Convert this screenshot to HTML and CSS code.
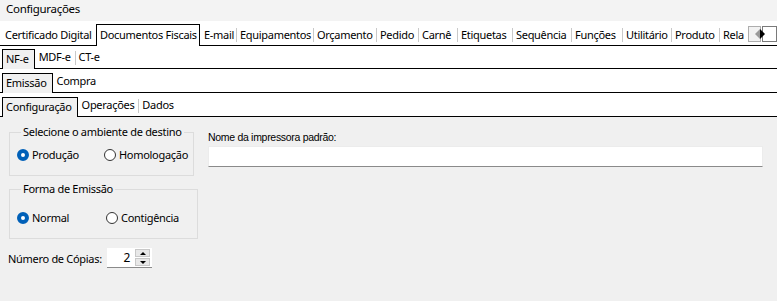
FILE: index.html
```html
<!DOCTYPE html>
<html lang="pt-BR">
<head>
  <meta charset="UTF-8">
  <title>Configurações</title>
  <link rel="stylesheet" href="styles.css">
</head>
<body>
  <div class="titlebar">Configurações</div>

  <div class="tabstrip main">
    <div class="tab">Certificado Digital</div>
    <div class="tab active">Documentos Fiscais</div>
    <div class="tab">E-mail</div>
    <div class="tab">Equipamentos</div>
    <div class="tab">Orçamento</div>
    <div class="tab">Pedido</div>
    <div class="tab">Carnê</div>
    <div class="tab">Etiquetas</div>
    <div class="tab">Sequência</div>
    <div class="tab">Funções</div>
    <div class="tab">Utilitário</div>
    <div class="tab">Produto</div>
    <div class="tab">Rela</div>
    <div class="scroller">
      <span class="scroll-btn disabled"><span class="tri left"></span></span>
      <span class="scroll-btn"><span class="tri right"></span></span>
    </div>
  </div>

  <div class="tabstrip sub first">
    <div class="tab active">NF-e</div>
    <div class="tab">MDF-e</div>
    <div class="tab">CT-e</div>
  </div>

  <div class="tabstrip sub">
    <div class="tab active">Emissão</div>
    <div class="tab">Compra</div>
  </div>

  <div class="tabstrip sub">
    <div class="tab active">Configuração</div>
    <div class="tab">Operações</div>
    <div class="tab">Dados</div>
  </div>

  <div class="content">
    <div class="left">
      <fieldset class="group amb">
        <legend>Selecione o ambiente de destino</legend>
        <div class="options">
          <label class="radio checked"><span class="dot"></span>Produção</label>
          <label class="radio"><span class="dot"></span>Homologação</label>
        </div>
      </fieldset>

      <fieldset class="group forma">
        <legend>Forma de Emissão</legend>
        <div class="options">
          <label class="radio checked"><span class="dot"></span>Normal</label>
          <label class="radio"><span class="dot"></span>Contigência</label>
        </div>
      </fieldset>

      <div class="copies">
        <span class="copies-label">Número de Cópias:</span>
        <div class="spin">
          <span class="spin-value">2</span>
          <div class="spin-btns">
            <span class="spin-btn"><span class="tri up"></span></span>
            <span class="spin-btn"><span class="tri down"></span></span>
          </div>
        </div>
      </div>
    </div>

    <div class="right">
      <div class="field-label">Nome da impressora padrão:</div>
      <div class="textbox"></div>
    </div>
  </div>
</body>
</html>
```

FILE: styles.css
```css
body {
  margin: 0;
  font-family: "Noto Sans", "Open Sans", sans-serif;
  font-size: 11px;
  letter-spacing: -0.3px;
  color: #000;
  background-color: #f0f0f0;
  height: 301px;
  overflow: hidden;
}
.titlebar {
  height: 21px;
  line-height: 17px;
  padding-left: 6px;
  font-size: 11.5px;
  background-color: #f3f3f3;
}
.tabstrip {
  display: flex;
  align-items: flex-end;
  background: #fff;
  border-bottom: 1px solid #000;
  height: 23px;
}
.tabstrip.main {
  height: 24px;
}
.tabstrip.sub {
  padding-left: 2px;
}
.tabstrip.sub.first {
  height: 22px;
}
.tab {
  flex-shrink: 0;
  box-sizing: border-box;
  height: 14px;
  line-height: 13px;
  padding: 0 4px 0 3px;
  margin-bottom: 3px;
  border-left: 1px solid #c9c9c9;
  white-space: nowrap;
}
.tab:first-child,
.tab.active + .tab {
  border-left-color: transparent;
}
.tab.active {
  height: 22px;
  line-height: 20px;
  margin-bottom: -1px;
  border: 1px solid #000;
  border-bottom: none;
  background: #fff;
}
.sub .tab.active {
  background: #f0f0f0;
  height: 20px;
  line-height: 18px;
  padding-right: 5px;
}
.sub .tab {
  line-height: 12px;
}

/* main strip tab widths */
.main .tab:nth-child(1) { width: 96px; padding-left: 4px; }
.main .tab:nth-child(2) { width: 104px; }
.main .tab:nth-child(3) { width: 36px; }
.main .tab:nth-child(4) { width: 77px; }
.main .tab:nth-child(5) { width: 63px; }
.main .tab:nth-child(6) { width: 42px; }
.main .tab:nth-child(7) { width: 39px; }
.main .tab:nth-child(8) { width: 55px; }
.main .tab:nth-child(9) { width: 59px; }
.main .tab:nth-child(10) { width: 51px; }
.main .tab:nth-child(11) { width: 49px; }
.main .tab:nth-child(12) { width: 48px; }
.main .tab:nth-child(13) { width: 29px; overflow: hidden; padding-right: 0; }

.scroller {
  flex-shrink: 0;
  display: flex;
  gap: 1px;
  margin-bottom: 3px;
}
.scroll-btn {
  box-sizing: border-box;
  width: 13px;
  height: 16px;
  border: 1px solid #7a7a7a;
  background: #fff;
  display: flex;
  align-items: center;
  justify-content: center;
}
.scroll-btn + .scroll-btn {
  width: 15px;
}
.scroll-btn.disabled {
  border-color: #adadad;
  background: #f2f2f2;
}
.tri {
  width: 0;
  height: 0;
  border-style: solid;
}
.tri.left {
  border-width: 5px 5px 5px 0;
  border-color: transparent #9a9a9a transparent transparent;
}
.tri.right {
  border-width: 5px 0 5px 5px;
  border-color: transparent transparent transparent #000;
}
.tri.up {
  border-width: 0 3px 3px 3px;
  border-color: transparent transparent #000 transparent;
}
.tri.down {
  border-width: 3px 3px 0 3px;
  border-color: #000 transparent transparent transparent;
}

.content {
  display: flex;
  padding: 9px 0 0 9px;
  gap: 10px;
}
.left {
  display: flex;
  flex-direction: column;
  width: 189px;
}
.group {
  margin: 0;
  border: 1px solid #dcdcdc;
  padding: 0 0 0 7px;
  box-sizing: border-box;
}
.group legend {
  padding: 0 2px;
  margin-left: 4px;
  line-height: 12px;
}
.group.amb {
  width: 185px;
  height: 50px;
}
.group.forma {
  width: 189px;
  height: 56px;
  margin-top: 7px;
}
.options {
  display: flex;
  align-items: center;
}
.amb .options { margin-top: 9px; }
.forma .options { margin-top: 15px; }
.radio {
  display: flex;
  align-items: center;
  gap: 3px;
}
.amb .radio:first-child { width: 87px; }
.forma .radio:first-child { width: 89px; }
.dot {
  width: 10px;
  height: 10px;
  border: 1px solid #333;
  border-radius: 50%;
  background: #fff;
  display: inline-block;
}
.radio.checked .dot {
  width: 4px;
  height: 4px;
  border: 4px solid #0060b8;
}
.copies {
  display: flex;
  align-items: center;
  margin-top: 9px;
  margin-left: -1px;
}
.copies-label {
  width: 99px;
}
.spin {
  display: flex;
  align-items: center;
  width: 45px;
  height: 20px;
  background: #fff;
  border-bottom: 1px solid #8a8a8a;
  box-sizing: border-box;
}
.spin-value {
  flex: 1;
  text-align: right;
  padding-right: 5px;
  font-size: 12px;
}
.spin-btns {
  display: flex;
  flex-direction: column;
  gap: 1px;
  margin-right: 2px;
}
.spin-btn {
  width: 15px;
  height: 8px;
  background: #e8e8e8;
  border: 1px solid #c8c8c8;
  box-sizing: border-box;
  display: flex;
  align-items: center;
  justify-content: center;
}
.right {
  flex: 1;
  padding-right: 14px;
}
.field-label {
  margin-top: 4px;
  line-height: 15px;
  font-family: "Liberation Sans", Arial, sans-serif;
  font-size: 10.5px;
  letter-spacing: -0.3px;
}
.textbox {
  margin-top: 1px;
  height: 21px;
  background: #fff;
  border: 1px solid #ececec;
  border-bottom: 1px solid #8a8a8a;
  box-sizing: border-box;
}
```
